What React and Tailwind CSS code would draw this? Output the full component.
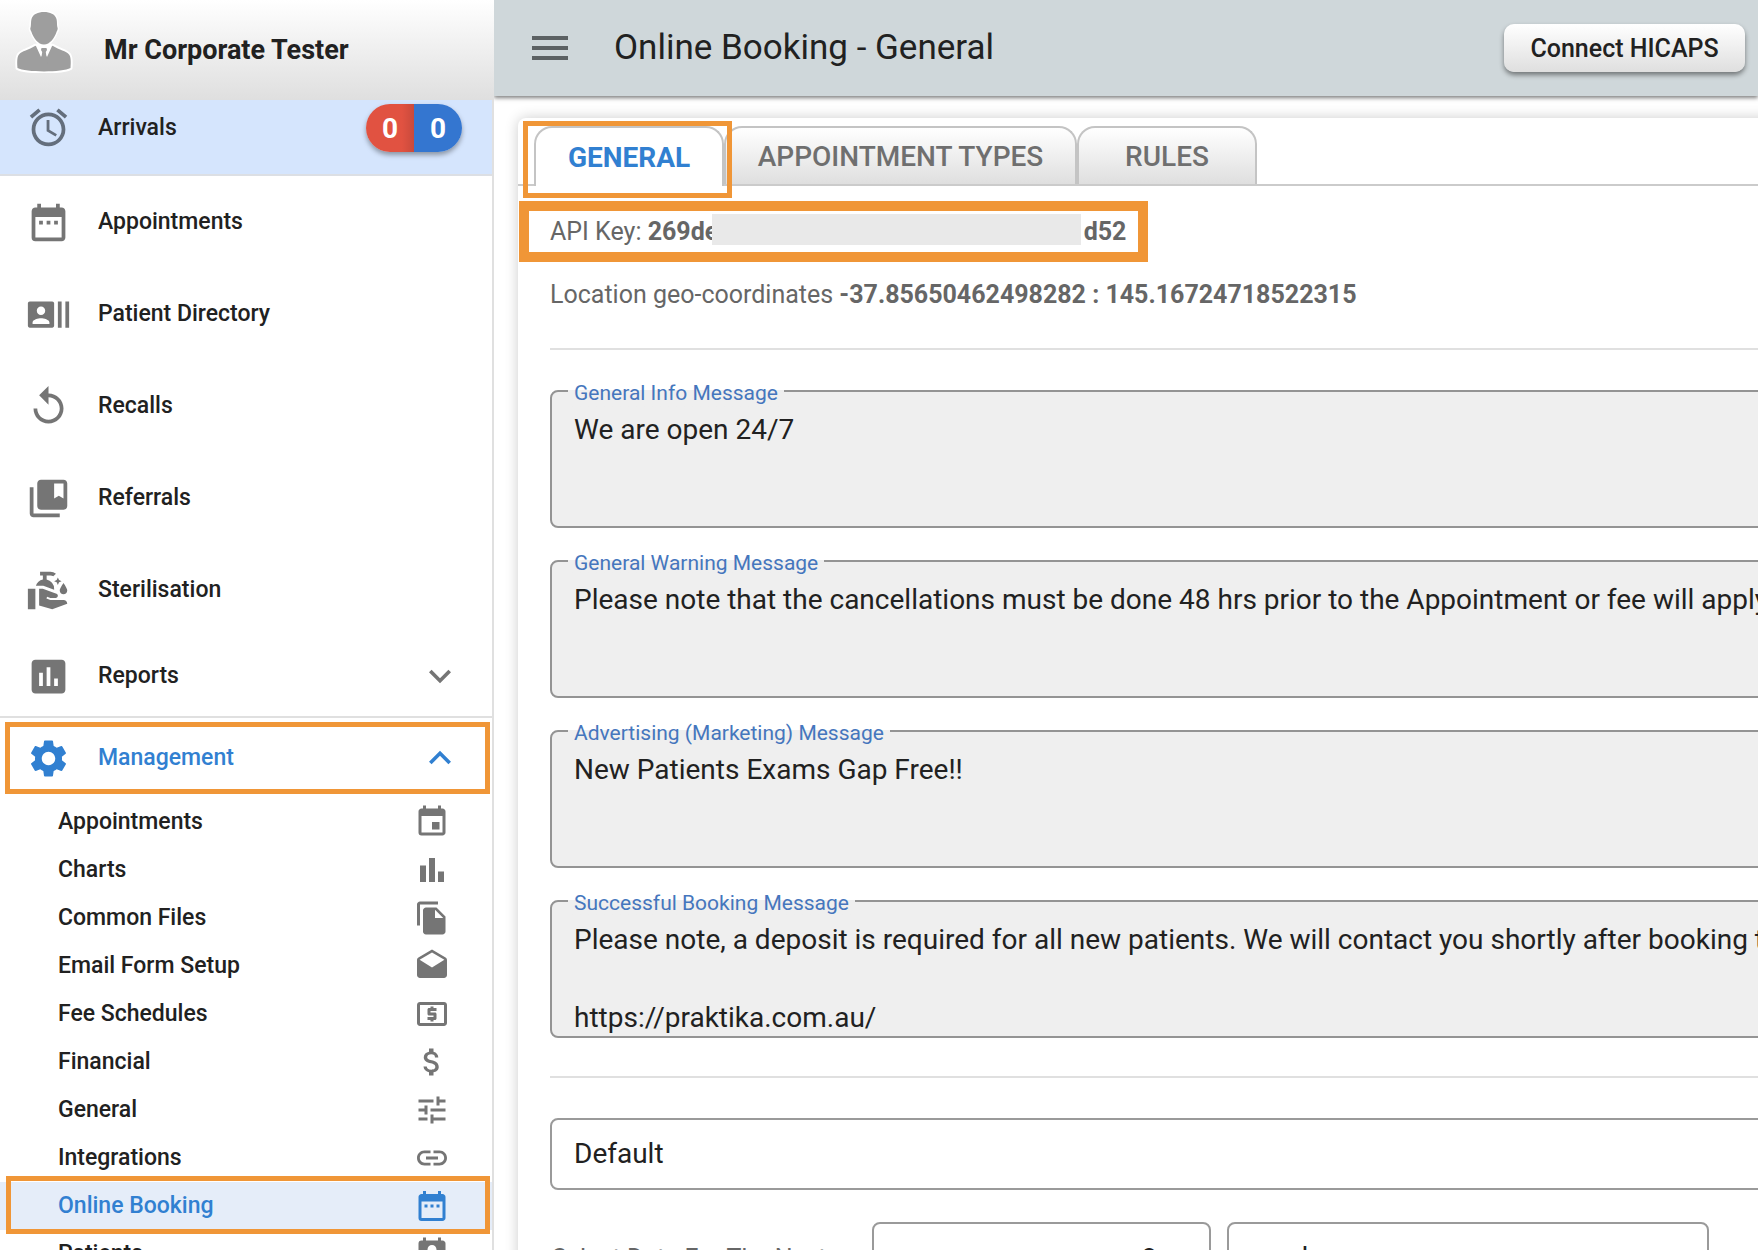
import React from "react";
import {
  MdAlarm, MdDateRange, MdRecentActors, MdReplay, MdCollectionsBookmark, MdCleanHands, MdAssessment,
  MdSettings, MdExpandMore, MdExpandLess, MdEvent, MdBarChart, MdFileCopy, MdDrafts, MdLocalAtm,
  MdAttachMoney, MdTune, MdLink, MdPermContactCalendar, MdMenu,
} from "react-icons/md";

const mainItems = [
  { label: "Appointments", Icon: MdDateRange },
  { label: "Patient Directory", Icon: MdRecentActors },
  { label: "Recalls", Icon: MdReplay },
  { label: "Referrals", Icon: MdCollectionsBookmark },
  { label: "Sterilisation", Icon: MdCleanHands },
];

const subItems = [
  { label: "Appointments", Icon: MdEvent },
  { label: "Charts", Icon: MdBarChart },
  { label: "Common Files", Icon: MdFileCopy },
  { label: "Email Form Setup", Icon: MdDrafts },
  { label: "Fee Schedules", Icon: MdLocalAtm },
  { label: "Financial", Icon: MdAttachMoney },
  { label: "General", Icon: MdTune },
  { label: "Integrations", Icon: MdLink },
  { label: "Online Booking", Icon: MdDateRange, active: true },
  { label: "Patients", Icon: MdPermContactCalendar },
];

const messages = [
  { id: "info", label: "General Info Message", value: "We are open 24/7" },
  {
    id: "warning",
    label: "General Warning Message",
    value: "Please note that the cancellations must be done 48 hrs prior to the Appointment or fee will apply.",
  },
  { id: "marketing", label: "Advertising (Marketing) Message", value: "New Patients Exams Gap Free!!" },
  {
    id: "success",
    label: "Successful Booking Message",
    value:
      "Please note, a deposit is required for all new patients. We will contact you shortly after booking to confirm.\n\nhttps://praktika.com.au/",
  },
];

function Avatar() {
  return (
    <svg viewBox="15 9 58 64" className="h-16 w-[58px] shrink-0" aria-hidden="true">
      <g fill="#9e9e9e" stroke="#fff" strokeWidth="4" strokeLinejoin="round" paintOrder="stroke">
        <path d="M17.500 68c-.5-6-.5-11 1.500-13.500 2.500-3.500 10-4.500 16-8.500l9-2 9 2c6 4 13.500 5 16 8.500 2 2.500 2 7.500 1.500 13.500-8 4.500-45 4.500-53 0z" />
      </g>
      <path d="M35.500 45l8.500-4 8.500 4-5.500 12-3-4-3 4z" fill="#fff" />
      <path d="M41.500 48h5l.5 2-1.200 2 1.700 12h-7l1.700-12-1.200-2z" fill="#9e9e9e" />
      <path
        d="M44 12c6 0 11 2 12.500 7 .7 3 .3 5 .8 8 .7 1 .5 3-.6 4.500C54.500 38 50 44.500 44 44.500S33.500 38 31.300 31.500C30.200 30 30 28 30.700 27c.5-3 .1-5 .8-8C33 14 38 12 44 12z"
        fill="#9e9e9e"
        stroke="#fff"
        strokeWidth="3"
        paintOrder="stroke"
      />
    </svg>
  );
}

function Highlight({ className }) {
  return <span aria-hidden="true" className={`pointer-events-none absolute z-20 border-[#f09637] ${className}`} />;
}

function Sidebar() {
  return (
    <aside className="w-[494px] shrink-0 border-r-2 border-[#e0e0e0] bg-white text-[23px] font-medium text-[#212121]">
      <div className="-mr-0.5 flex h-[100px] items-start gap-[31px] bg-linear-to-b from-white to-[#dfdfdf] pl-[15px] pt-[9px]">
        <Avatar />
        <h2 className="pt-5 text-[27px] leading-[42px] font-bold">Mr Corporate Tester</h2>
      </div>
      <nav>
        <a href="#arrivals" className="flex h-[76px] items-start border-b-2 border-[#dcdfe4] bg-[#d5e5fd] pl-[26px] pr-[30px]">
          <MdAlarm className="mt-[5px] size-[45px] text-[#646e7c]" />
          <span className="ml-[27px] flex-1 pt-2 leading-[40px]">Arrivals</span>
          <span className="mt-1 flex h-12 rounded-full text-[28px] leading-[50px] font-bold text-white shadow-[0_3px_5px_rgba(0,0,0,0.35)]">
            <span className="w-12 rounded-l-full bg-linear-to-r from-[#e15241] from-75% to-[#c94a3c] text-center">0</span>
            <span className="w-12 rounded-r-full bg-[#3476d0] text-center">0</span>
          </span>
        </a>
        {mainItems.map(({ label, Icon }) => (
          <a key={label} href="#main" className="flex h-[92px] items-center pl-[26px]">
            <Icon className="size-[45px] text-[#757575]" />
            <span className="ml-[27px]">{label}</span>
          </a>
        ))}
        <button type="button" className="flex h-[82px] w-full items-center border-b-2 border-[#e0e0e0] pl-[26px] pr-[30px]">
          <MdAssessment className="size-[45px] text-[#757575]" />
          <span className="ml-[27px] flex-1 text-left">Reports</span>
          <MdExpandMore className="size-11 text-[#757575]" />
        </button>
        <button type="button" className="relative flex h-20 w-full items-center pl-[26px] pr-[30px] text-[#3180d1]">
          <MdSettings className="size-[45px]" />
          <span className="ml-[27px] flex-1 text-left">Management</span>
          <MdExpandLess className="size-11" />
          <Highlight className="inset-y-1 right-0.5 left-[5px] border-5" />
        </button>
        {subItems.map(({ label, Icon, active }) => (
          <a
            key={label}
            href="#sub"
            className={`relative flex h-12 items-center justify-between pl-[58px] pr-[42px] ${active ? "bg-[#e5edf9] text-[#3180d1]" : ""}`}
          >
            <span>{label}</span>
            <Icon className={`size-9 ${active ? "" : "text-[#757575]"}`} />
            {active && <Highlight className="-top-1.5 -bottom-1 left-1.5 right-0.5 border-5" />}
          </a>
        ))}
      </nav>
    </aside>
  );
}

function Message({ id, label, value }) {
  return (
    <div className="relative h-[138px] rounded-lg border-2 border-[#949494] bg-[#efefef]">
      <label
        htmlFor={id}
        className="absolute -top-[13px] left-4 bg-linear-to-b from-white from-40% to-[#efefef] to-40% px-1.5 text-[21px] leading-[28px] text-[#4576bd]"
      >
        {label}
      </label>
      <textarea
        id={id}
        defaultValue={value}
        className="mt-[18px] block h-[116px] w-full resize-none overflow-hidden bg-transparent pl-[22px] text-[28px] leading-[39px] text-[#212121] outline-none"
      />
    </div>
  );
}

function Main() {
  return (
    <main className="min-w-0 flex-1 overflow-hidden">
      <header className="relative z-10 flex h-24 items-center bg-[#cfd7da] pl-8 pr-[13px] shadow-[0_2px_4px_rgba(0,0,0,0.5)]">
        <button type="button" aria-label="Toggle menu">
          <MdMenu className="size-12 text-[#5c6163]" />
        </button>
        <h1 className="ml-10 flex-1 text-[35px] text-[#212121]">Online Booking - General</h1>
        <button
          type="button"
          className="h-12 w-[241px] rounded-[10px] bg-linear-to-b from-white to-[#dfdfdf] pt-0.5 text-[25px] font-medium text-[#212121] shadow-[0_3px_5px_rgba(0,0,0,0.45)]"
        >
          Connect HICAPS
        </button>
      </header>

      <section className="mt-[22px] ml-6 min-w-[1500px] rounded-tl-lg bg-white pb-10 shadow-[0_0_14px_rgba(0,0,0,0.2)]">
        <div role="tablist" className="flex h-[68px] items-end border-b-2 border-[#cbcbcb] pl-4 text-[28px] font-medium text-[#6f6f6f]">
          <button type="button" role="tab" aria-selected="true" className="relative -mb-0.5 h-[60px] w-[190px] rounded-t-[18px] border-2 border-b-0 border-[#c4c4c4] bg-white pt-0.5 font-bold text-[#3180d1]">
            GENERAL
            <Highlight className="-top-[7px] -left-[13px] h-[77px] w-[209px] border-5" />
          </button>
          <button type="button" role="tab" aria-selected="false" className="h-[58px] w-[353px] rounded-t-[18px] border-2 border-b-0 border-[#c4c4c4] bg-linear-to-b from-white to-[#dfdfdf] pt-0.5">
            APPOINTMENT TYPES
          </button>
          <button type="button" role="tab" aria-selected="false" className="h-[58px] w-[180px] rounded-t-[18px] border-2 border-b-0 border-[#c4c4c4] bg-linear-to-b from-white to-[#dfdfdf] pt-0.5">
            RULES
          </button>
        </div>

        <div className="pt-[15px]">
          <div className="ml-px flex h-[61px] w-[629px] items-start border-10 border-[#f09637] pt-[3px] pl-[21px] text-[25px] leading-[36px] text-[#666]">
            <span>API Key:&nbsp;</span>
            <span className="w-16 overflow-hidden font-bold">269de</span>
            <span className="h-[31px] w-[369px] bg-[#e9e9e9]" />
            <span className="ml-[3px] font-bold">d52</span>
          </div>
          <div className="px-8">
            <p className="mt-[15px] text-[25px] leading-[36px] text-[#666]">
              Location geo-coordinates <b>-37.85650462498282 : 145.16724718522315</b>
            </p>
            <hr className="mt-[35px] border-t-2 border-[#e0e0e0]" />
            <div className="mt-10 flex flex-col gap-8">
              {messages.map((m) => (
                <Message key={m.id} {...m} />
              ))}
            </div>
            <hr className="mt-[38px] border-t-2 border-[#e0e0e0]" />
            <select
              aria-label="Template"
              className="mt-10 block h-[72px] w-full appearance-none rounded-lg border-2 border-[#9a9a9a] bg-white px-[22px] text-[28px] text-[#212121]"
            >
              <option>Default</option>
            </select>
            <div className="mt-8 flex items-center gap-4 text-[28px] text-[#212121]">
              <label htmlFor="range" className="w-[306px] pt-0.5 pl-0.5 text-[25px] text-[#666]">
                Select Date For The Next
              </label>
              <input
                id="range"
                defaultValue="8"
                className="h-[72px] w-[339px] rounded-lg border-2 border-[#9a9a9a] pr-[52px] text-right"
              />
              <select
                aria-label="Range unit"
                className="h-[72px] w-[482px] appearance-none rounded-lg border-2 border-[#9a9a9a] bg-white px-[22px]"
              >
                <option>weeks</option>
              </select>
            </div>
          </div>
        </div>
      </section>
    </main>
  );
}

export default function App() {
  return (
    <div className="flex h-screen overflow-hidden bg-white font-[Roboto,sans-serif]">
      <Sidebar />
      <Main />
    </div>
  );
}
